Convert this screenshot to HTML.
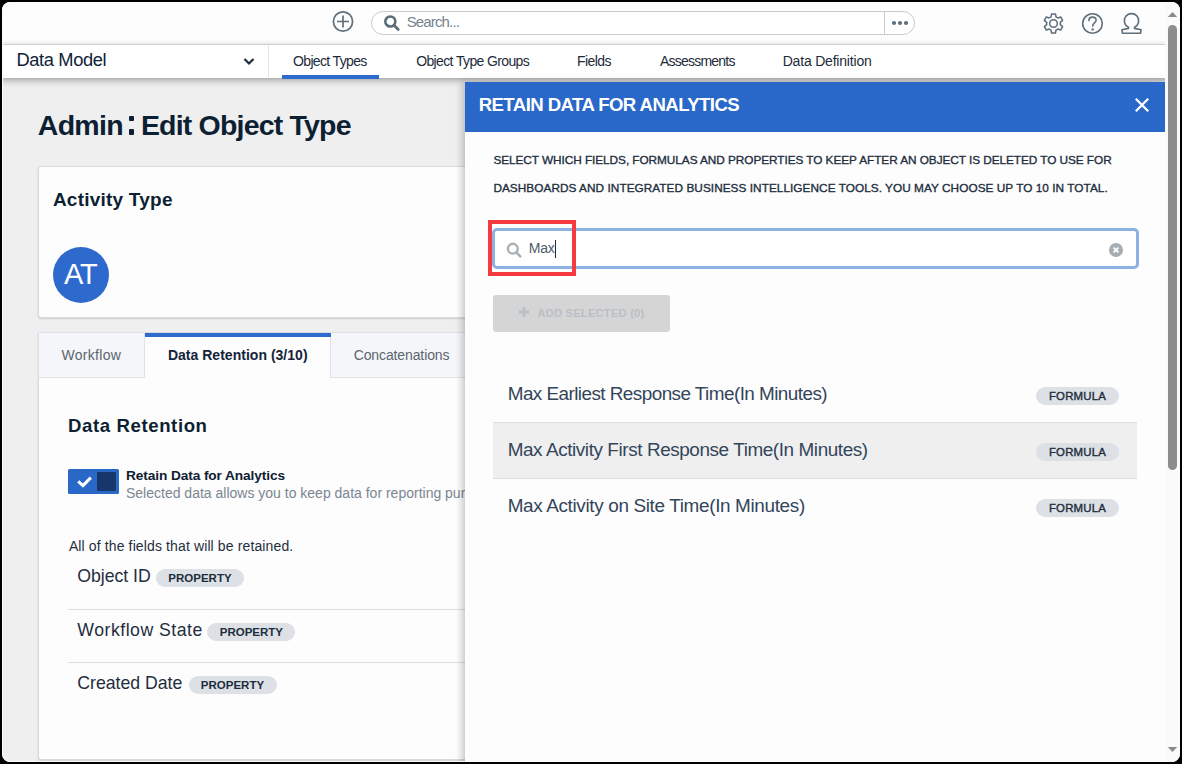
<!DOCTYPE html>
<html><head><meta charset="utf-8">
<style>
*{box-sizing:border-box;margin:0;padding:0}
html,body{width:1182px;height:764px;overflow:hidden;background:#000}
body{font-family:"Liberation Sans",sans-serif;color:#0f2033;position:relative}
.a{position:absolute}
#root{position:absolute;left:0;top:0;width:1182px;height:764px;background:#efefef;overflow:hidden}
#frame{position:absolute;left:2px;top:2px;width:1178px;height:760px;border-radius:8px;box-shadow:0 0 0 30px #000;border:1px solid #fbfbfb;z-index:100}
.t{position:absolute;white-space:nowrap;line-height:1}
.card{background:#fdfdfd;border-radius:3px;border:1px solid #d6dbe0;box-shadow:0 1px 2px rgba(0,0,0,.14);z-index:2}
.fb{font-weight:400!important;font-size:11.4px!important;-webkit-text-stroke:0.4px #1c2d3d;letter-spacing:0.2px!important}
.badge{background:#dde1e5;border-radius:9px;font-size:11.5px;font-weight:700;color:#1c2d3d;text-align:center;line-height:17.5px;padding-top:1px;letter-spacing:0px}
</style></head>
<body>
<div id="root">
<div class="a" style="left:0;top:0;width:1182px;height:44px;background:#fdfdfd"></div>
<div class="a" style="left:0;top:44px;width:1182px;height:1px;background:#dfe4e8"></div>
<svg class="a" style="left:332px;top:11px;z-index:10" width="22" height="22" viewBox="0 0 22 22"><circle cx="11" cy="10.5" r="9.6" fill="none" stroke="#5e6e7b" stroke-width="1.7"/><path d="M11 4.5V16.5M5 10.5H17" stroke="#5e6e7b" stroke-width="1.7"/></svg>
<div class="a" style="left:371px;top:11px;width:544px;height:24px;border:1px solid #c9cbcd;border-radius:12px;background:#fff"></div>
<div class="a" style="left:884px;top:11px;width:1px;height:24px;background:#c9cbcd"></div>
<svg class="a" style="left:383px;top:14px;z-index:10" width="18" height="18" viewBox="0 0 18 18"><circle cx="7.3" cy="7.5" r="5" fill="none" stroke="#5b6c79" stroke-width="2.6"/><path d="M11 11.3L15.2 15.5" stroke="#5b6c79" stroke-width="2.8" stroke-linecap="round"/></svg>
<svg class="a" style="left:890px;top:19px;z-index:10" width="20" height="8" viewBox="0 0 20 8"><circle cx="4" cy="4" r="2.1" fill="#5f707d"/><circle cx="10" cy="4" r="2.1" fill="#5f707d"/><circle cx="16" cy="4" r="2.1" fill="#5f707d"/></svg>
<svg class="a" style="left:1042px;top:12px;z-index:10" width="23" height="23" viewBox="0 0 24 24"><path fill="none" stroke="#5e6e7b" stroke-width="1.6" stroke-linejoin="round" d="M10 2h4l.6 3.1 1.9 1.1 3-1 2 3.5-2.4 2.1v2.4l2.4 2.1-2 3.5-3-1-1.9 1.1L14 22h-4l-.6-3.1-1.9-1.1-3 1-2-3.5 2.4-2.1v-2.4L2.5 8.7l2-3.5 3 1 1.9-1.1z"/><circle cx="12" cy="12" r="4" fill="none" stroke="#5e6e7b" stroke-width="1.6"/></svg>
<svg class="a" style="left:1081px;top:12px;z-index:10" width="23" height="23" viewBox="0 0 23 23"><circle cx="11.5" cy="11.5" r="9.8" fill="none" stroke="#5e6e7b" stroke-width="1.6"/><path d="M7.9 8.6c0-2.2 1.6-3.5 3.6-3.5s3.6 1.3 3.6 3.2c0 2.6-3.4 2.6-3.4 5.6" fill="none" stroke="#5e6e7b" stroke-width="1.6" stroke-linecap="round"/><circle cx="11.6" cy="17.4" r="1.2" fill="#5e6e7b"/></svg>
<svg class="a" style="left:1120px;top:12px;z-index:10" width="23" height="23" viewBox="0 0 23 23"><path fill="none" stroke="#5e6e7b" stroke-width="1.6" stroke-linejoin="round" d="M8.5 15.35V16.4L1.9 17.8L2.5 21.3H20.5L21.1 17.8L14.5 16.4V15.35A7.2 7.2 0 1 0 8.5 15.35Z"/></svg>
<div class="a" style="left:0;top:45px;width:1182px;height:33px;background:#fff;box-shadow:0 2px 7px rgba(0,0,0,.36);z-index:5"></div>
<div class="a" style="left:268px;top:45px;width:1px;height:32px;background:#e3e6e9;z-index:6"></div>
<svg class="a" style="left:242px;top:56px;z-index:10" width="14" height="10" viewBox="0 0 14 10"><path d="M2.5 3L7 7.5 11.5 3" fill="none" stroke="#1d2b3a" stroke-width="2.2"/></svg>
<div class="a" style="left:282px;top:75px;width:97px;height:4px;background:#2e6acb;z-index:10"></div>
<div class="a" style="left:128.5px;top:115.6px;width:5.8px;height:5.7px;background:#0d1f33;border-radius:1px;z-index:10"></div>
<div class="a" style="left:128.5px;top:129.1px;width:5.8px;height:5.8px;background:#0d1f33;border-radius:1px;z-index:10"></div>
<div class="a card" style="left:38px;top:166px;width:700px;height:152px;"></div>
<div class="a" style="left:53px;top:246.5px;width:56px;height:56px;border-radius:50%;background:#2e6acd;z-index:10"></div>
<div class="a card" style="left:38px;top:332px;width:700px;height:428px;"></div>
<div class="a" style="left:38px;top:332px;width:107px;height:46px;background:#f5f6f9;border:1px solid #dfe2e6;z-index:8"></div>
<div class="a" style="left:330px;top:332px;width:400px;height:46px;background:#f5f6f9;border:1px solid #dfe2e6;z-index:8"></div>
<div class="a" style="left:145px;top:333px;width:186px;height:4px;background:#2e6acb;z-index:9"></div>
<div class="a" style="left:68px;top:469px;width:51px;height:25px;background:#2a68c8;border-radius:1.5px;z-index:10"></div>
<div class="a" style="left:97px;top:472px;width:19px;height:19px;background:#17366a;border-radius:1px;z-index:11"></div>
<svg class="a" style="left:76px;top:474.3px;z-index:11" width="17" height="14" viewBox="0 0 17 14"><path d="M2.2 7.3L7 11.6 14.8 3.6" fill="none" stroke="#fff" stroke-width="3"/></svg>
<div class="a" style="left:68px;top:609px;width:500px;height:1px;background:#dcdfe2;z-index:10"></div>
<div class="a" style="left:68px;top:662px;width:500px;height:1px;background:#dcdfe2;z-index:10"></div>
<div class="a badge " style="left:156px;top:569.2px;width:88px;height:17.5px;z-index:10">PROPERTY</div>
<div class="a badge " style="left:207.4px;top:623px;width:88px;height:17.5px;z-index:10">PROPERTY</div>
<div class="a badge " style="left:188.5px;top:676.3px;width:88px;height:17.5px;z-index:10">PROPERTY</div>
<div class="a" style="left:465px;top:82px;width:700px;height:690px;background:#fdfdfd;box-shadow:-3px 0 7px rgba(0,0,0,.22);z-index:50"></div>
<div class="a" style="left:465px;top:82px;width:700px;height:50px;background:#2968c8;z-index:51"></div>
<svg class="a" style="left:1134px;top:96.5px;z-index:60" width="16" height="16" viewBox="0 0 16 16"><path d="M1.8 1.8L14.2 14.2M14.2 1.8L1.8 14.2" stroke="#fff" stroke-width="2.3"/></svg>
<div class="a" style="left:492px;top:228px;width:647px;height:41px;border:3px solid #8db1e2;border-radius:5px;background:#fff;z-index:55"></div>
<svg class="a" style="left:505px;top:241px;z-index:60" width="18" height="18" viewBox="0 0 18 18"><circle cx="7.8" cy="7.7" r="4.9" fill="none" stroke="#a9b1b8" stroke-width="2.4"/><path d="M11.3 11.3L15.3 15.3" stroke="#a9b1b8" stroke-width="2.6" stroke-linecap="round"/></svg>
<div class="a" style="left:555px;top:239.5px;width:1.2px;height:18.5px;background:#1d2b3a;z-index:61"></div>
<svg class="a" style="left:1109px;top:243px;z-index:60" width="14" height="14" viewBox="0 0 14 14"><circle cx="7" cy="7" r="7" fill="#a6adb3"/><path d="M4.6 4.6L9.4 9.4M9.4 4.6L4.6 9.4" stroke="#fff" stroke-width="1.8"/></svg>
<div class="a" style="left:488px;top:220px;width:88px;height:56px;border:4px solid #f53b3d;z-index:70"></div>
<div class="a" style="left:493px;top:295px;width:177px;height:37px;background:#d5d5d5;border-radius:3px;z-index:55"></div>
<svg class="a" style="left:518px;top:306px;z-index:60" width="12" height="12" viewBox="0 0 12 12"><path d="M6 1V11M1 6H11" stroke="#b9c0c6" stroke-width="3"/></svg>
<div class="a" style="left:493px;top:422px;width:644px;height:57px;background:#efefef;border-top:1px solid #dedede;border-bottom:1px solid #dedede;z-index:55"></div>
<div class="a badge fb" style="left:1036px;top:387.2px;width:83px;height:17.8px;z-index:60">FORMULA</div>
<div class="a badge fb" style="left:1036px;top:443px;width:83px;height:17.8px;z-index:60">FORMULA</div>
<div class="a badge fb" style="left:1036px;top:499px;width:83px;height:17.8px;z-index:60">FORMULA</div>
<div class="a" style="left:1165px;top:0;width:17px;height:764px;background:#fafafa;z-index:90"></div>
<div class="a" style="left:1168px;top:25px;width:9px;height:445px;border-radius:4.5px;background:#8d8d8d;z-index:91"></div>
<svg class="a" style="left:1167px;top:11px;z-index:91" width="11" height="7" viewBox="0 0 11 7"><path d="M0.8 6H10.2L5.5 1z" fill="#8a8a8a"/></svg>
<svg class="a" style="left:1167px;top:746px;z-index:91" width="11" height="7" viewBox="0 0 11 7"><path d="M0.8 1H10.2L5.5 6z" fill="#8a8a8a"/></svg>
<div class="t" id="search" style="left:406.70px;top:14.11px;font-size:15px;font-weight:400;color:#76838e;z-index:10;letter-spacing:-0.858px;">Search...</div>
<div class="t" id="dm" style="left:16.50px;top:51.01px;font-size:18.3px;font-weight:400;color:#0f2236;z-index:10;letter-spacing:-0.381px;">Data Model</div>
<div class="t" id="n1" style="left:293.00px;top:54.01px;font-size:14px;font-weight:400;color:#1d2b3a;z-index:10;letter-spacing:-0.646px;">Object Types</div>
<div class="t" id="n2" style="left:416.20px;top:54.01px;font-size:14px;font-weight:400;color:#1d2b3a;z-index:10;letter-spacing:-0.630px;">Object Type Groups</div>
<div class="t" id="n3" style="left:577.00px;top:54.01px;font-size:14px;font-weight:400;color:#1d2b3a;z-index:10;letter-spacing:-0.549px;">Fields</div>
<div class="t" id="n4" style="left:660.00px;top:54.01px;font-size:14px;font-weight:400;color:#1d2b3a;z-index:10;letter-spacing:-0.785px;">Assessments</div>
<div class="t" id="n5" style="left:782.70px;top:54.01px;font-size:14px;font-weight:400;color:#1d2b3a;z-index:10;letter-spacing:-0.196px;">Data Definition</div>
<div class="t" id="h1a" style="left:37.80px;top:111.00px;font-size:28.5px;font-weight:700;color:#0d1f33;z-index:10;letter-spacing:-0.712px;">Admin</div>
<div class="t" id="h1b" style="left:140.90px;top:111.00px;font-size:28.5px;font-weight:700;color:#0d1f33;z-index:10;letter-spacing:-0.807px;">Edit Object Type</div>
<div class="t" id="act" style="left:52.90px;top:189.91px;font-size:19px;font-weight:700;color:#0d1f33;z-index:10;letter-spacing:0.227px;">Activity Type</div>
<div class="t" id="at" style="left:63.90px;top:260.01px;font-size:29px;font-weight:400;color:#ffffff;z-index:10;letter-spacing:-1.190px;">AT</div>
<div class="t" id="tw" style="left:61.40px;top:347.82px;font-size:14px;font-weight:400;color:#5a6570;z-index:10;letter-spacing:0.315px;">Workflow</div>
<div class="t" id="tdr" style="left:167.90px;top:347.82px;font-size:14px;font-weight:700;color:#13233a;z-index:10;letter-spacing:0.021px;">Data Retention (3/10)</div>
<div class="t" id="tc" style="left:353.70px;top:347.82px;font-size:14px;font-weight:400;color:#5a6570;z-index:10;letter-spacing:-0.115px;">Concatenations</div>
<div class="t" id="dr" style="left:68.10px;top:417.40px;font-size:18.6px;font-weight:700;color:#0d1f33;z-index:10;letter-spacing:0.589px;">Data Retention</div>
<div class="t" id="rda" style="left:126.00px;top:468.70px;font-size:13.7px;font-weight:700;color:#0f2033;z-index:10;letter-spacing:-0.100px;">Retain Data for Analytics</div>
<div class="t" id="sel" style="left:126.00px;top:486.01px;font-size:14px;font-weight:400;color:#7b8691;z-index:10;">Selected data allows you to keep data for reporting purposes</div>
<div class="t" id="all" style="left:68.90px;top:538.51px;font-size:14px;font-weight:400;color:#1f2d3d;z-index:10;letter-spacing:0.124px;">All of the fields that will be retained.</div>
<div class="t" id="oid" style="left:77.30px;top:567.81px;font-size:17.7px;font-weight:400;color:#1f2e3e;z-index:10;letter-spacing:-0.031px;">Object ID</div>
<div class="t" id="wfs" style="left:77.30px;top:622.21px;font-size:17.7px;font-weight:400;color:#1f2e3e;z-index:10;letter-spacing:0.494px;">Workflow State</div>
<div class="t" id="cd" style="left:77.30px;top:675.21px;font-size:17.7px;font-weight:400;color:#1f2e3e;z-index:10;letter-spacing:-0.015px;">Created Date</div>
<div class="t" id="ptitle" style="left:478.70px;top:95.81px;font-size:18.6px;font-weight:700;color:#ffffff;z-index:60;letter-spacing:-0.573px;">RETAIN DATA FOR ANALYTICS</div>
<div class="t" id="d1" style="left:493.40px;top:155.31px;font-size:11.8px;font-weight:400;color:#1e2e3e;z-index:60;letter-spacing:-0.053px;-webkit-text-stroke:0.35px #1e2e3e;">SELECT WHICH FIELDS, FORMULAS AND PROPERTIES TO KEEP AFTER AN OBJECT IS DELETED TO USE FOR</div>
<div class="t" id="d2" style="left:493.40px;top:182.91px;font-size:11.8px;font-weight:400;color:#1e2e3e;z-index:60;letter-spacing:0.046px;-webkit-text-stroke:0.35px #1e2e3e;">DASHBOARDS AND INTEGRATED BUSINESS INTELLIGENCE TOOLS. YOU MAY CHOOSE UP TO 10 IN TOTAL.</div>
<div class="t" id="max" style="left:528.80px;top:240.91px;font-size:14px;font-weight:400;color:#4e5d6b;z-index:60;letter-spacing:-0.224px;">Max</div>
<div class="t" id="add" style="left:537.30px;top:308.20px;font-size:11.3px;font-weight:700;color:#b9c0c6;z-index:60;letter-spacing:0.143px;">ADD SELECTED (0)</div>
<div class="t" id="r1" style="left:507.70px;top:385.21px;font-size:18.9px;font-weight:400;color:#33455a;z-index:60;letter-spacing:-0.546px;">Max Earliest Response Time(In Minutes)</div>
<div class="t" id="r2" style="left:507.70px;top:441.00px;font-size:18.9px;font-weight:400;color:#33455a;z-index:60;letter-spacing:-0.407px;">Max Activity First Response Time(In Minutes)</div>
<div class="t" id="r3" style="left:507.70px;top:497.00px;font-size:18.9px;font-weight:400;color:#33455a;z-index:60;letter-spacing:-0.339px;">Max Activity on Site Time(In Minutes)</div>
</div>
<div id="frame"></div>
</body></html>
